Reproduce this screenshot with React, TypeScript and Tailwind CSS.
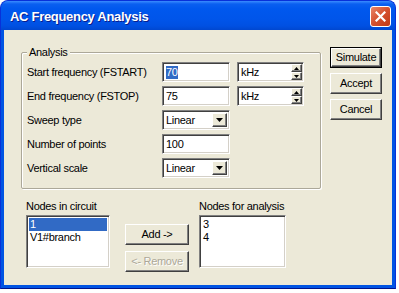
import React from 'react';

const font = "font-['Liberation_Sans',Arial,sans-serif] tracking-[-0.3px]";

// classic sunken 3D edge used by edits, lists and combos
const sunken =
  'border border-t-[#808080] border-l-[#808080] border-b-white border-r-white shadow-[inset_1px_1px_0_#404040,inset_-1px_-1px_0_#d4d0c8]';
const raised =
  'border border-t-white border-l-white border-b-[#404040] border-r-[#404040] shadow-[inset_-1px_-1px_0_#808080,inset_1px_1px_0_#ece9d8]';

function TextBox({ value, selected }: { value: string; selected?: boolean }) {
  return (
    <div className={`w-[68px] h-[20px] bg-white flex items-center pl-[3px] ${sunken}`}>
      <span className={selected ? 'bg-[#316ac5] text-white leading-[13px]' : 'leading-[13px]'}>{value}</span>
    </div>
  );
}

function Combo({ value }: { value: string }) {
  return (
    <div className={`w-[68px] h-[20px] bg-white flex items-center justify-between pl-[3px] pr-[2px] ${sunken}`}>
      <span>{value}</span>
      <div className={`w-[15px] h-[14px] bg-[#ece9d8] flex items-center justify-center ${raised}`}>
        <svg width="7" height="4" viewBox="0 0 7 4">
          <path d="M0 0h7L3.5 4z" fill="#000" />
        </svg>
      </div>
    </div>
  );
}

function UnitSpin({ value }: { value: string }) {
  return (
    <div className={`w-[67px] h-[20px] bg-white flex items-center justify-between pl-[3px] pr-[1px] ${sunken}`}>
      <span>{value}</span>
      <div className="flex flex-col h-[16px] w-[11px]">
        <div className={`flex-1 bg-[#ece9d8] flex items-center justify-center ${raised}`}>
          <svg width="5" height="3" viewBox="0 0 5 3">
            <path d="M2.5 0L5 3H0z" fill="#000" />
          </svg>
        </div>
        <div className={`flex-1 bg-[#ece9d8] flex items-center justify-center ${raised}`}>
          <svg width="5" height="3" viewBox="0 0 5 3">
            <path d="M0 0h5L2.5 3z" fill="#000" />
          </svg>
        </div>
      </div>
    </div>
  );
}

function Btn({ label, isDefault, disabled, w = 'w-[52px]' }: { label: string; isDefault?: boolean; disabled?: boolean; w?: string }) {
  return (
    <div className={`${w} h-[21px] ${isDefault ? 'border border-black' : ''}`}>
      <div
        className={`w-full h-full bg-[#ece9d8] flex items-center justify-center ${raised} ${
          disabled ? 'text-[#aca899] [text-shadow:1px_1px_0_#fff]' : 'text-black'
        }`}
      >
        {label}
      </div>
    </div>
  );
}

const rows: { label: string; control: React.ReactNode }[] = [
  {
    label: 'Start frequency (FSTART)',
    control: (
      <div className="flex gap-[7px]">
        <TextBox value="70" selected />
        <UnitSpin value="kHz" />
      </div>
    ),
  },
  {
    label: 'End frequency (FSTOP)',
    control: (
      <div className="flex gap-[7px]">
        <TextBox value="75" />
        <UnitSpin value="kHz" />
      </div>
    ),
  },
  { label: 'Sweep type', control: <Combo value="Linear" /> },
  { label: 'Number of points', control: <TextBox value="100" /> },
  { label: 'Vertical scale', control: <Combo value="Linear" /> },
];

export default function App() {
  return (
    <div className={`w-[399px] h-[293px] bg-white text-[11px] text-black ${font}`}>
      <div className="w-[396px] h-[289px] rounded-t-[8px] bg-[#0054e3] border border-[#0831d9] border-b-[#00138c] flex flex-col overflow-hidden">
        {/* Title bar */}
        <div className="h-[29px] shrink-0 flex items-center justify-between pl-[9px] pr-[4px] bg-[linear-gradient(#3a8cff_0px,#0a5ff0_3px,#0058ee_8px,#0055ea_18px,#0050e2_25px,#0047d0_29px)]">
          <span className="text-white font-bold text-[13px] mt-[3px] [text-shadow:1px_1px_0_#0a1e8c]">AC Frequency Analysis</span>
          <div className="w-[21px] h-[21px] rounded-[3px] border border-white bg-[linear-gradient(135deg,#e8866a,#d5502e_50%,#c23a16)] flex items-center justify-center mt-[1px]">
            <svg width="11" height="11" viewBox="0 0 11 11">
              <path d="M1.5 1.5l8 8M9.5 1.5l-8 8" stroke="#fff" strokeWidth="2.2" strokeLinecap="square" />
            </svg>
          </div>
        </div>

        {/* Body */}
        <div className="flex-1 mx-[3px] mb-[3px] bg-[#ece9d8] flex flex-col">
          <div className="flex items-start">
            {/* Analysis group */}
            <div className="relative ml-[17px] mt-[22px] w-[300px] h-[137px] border border-[#aca899] shadow-[1px_1px_0_#fff,inset_1px_1px_0_#fff] rounded-[2px] pl-[5px] pt-[9px]">
              <span className="absolute -top-[8px] left-[5px] px-[2px] bg-[#ece9d8] leading-[14px]">Analysis</span>
              <div className="flex flex-col gap-[4px]">
                {rows.map((r) => (
                  <div key={r.label} className="h-[20px] flex items-center">
                    <span className="w-[135px] shrink-0">{r.label}</span>
                    {r.control}
                  </div>
                ))}
              </div>
            </div>

            {/* Dialog buttons */}
            <div className="ml-[9px] mt-[17px] flex flex-col gap-[5px]">
              <Btn label="Simulate" isDefault />
              <Btn label="Accept" />
              <Btn label="Cancel" />
            </div>
          </div>

          {/* Node lists */}
          <div className="flex items-start ml-[22px] mt-[10px]">
            <div className="flex flex-col">
              <span className="leading-[14px] mb-[2px]">Nodes in circuit</span>
              <div className={`w-[84px] h-[53px] bg-white p-[2px] ${sunken}`}>
                <div className="bg-[#316ac5] text-white leading-[13px] px-[1px]">1</div>
                <div className="leading-[13px] px-[1px]">V1#branch</div>
              </div>
            </div>

            <div className="ml-[15px] mt-[25px] flex flex-col gap-[6px]">
              <Btn label="Add ->" w="w-[64px]" />
              <Btn label="<- Remove" w="w-[64px]" disabled />
            </div>

            <div className="ml-[10px] flex flex-col">
              <span className="leading-[14px] mb-[2px]">Nodes for analysis</span>
              <div className={`w-[87px] h-[53px] bg-white p-[2px] ${sunken}`}>
                <div className="leading-[13px] px-[1px]">3</div>
                <div className="leading-[13px] px-[1px]">4</div>
              </div>
            </div>
          </div>
        </div>
      </div>
    </div>
  );
}
